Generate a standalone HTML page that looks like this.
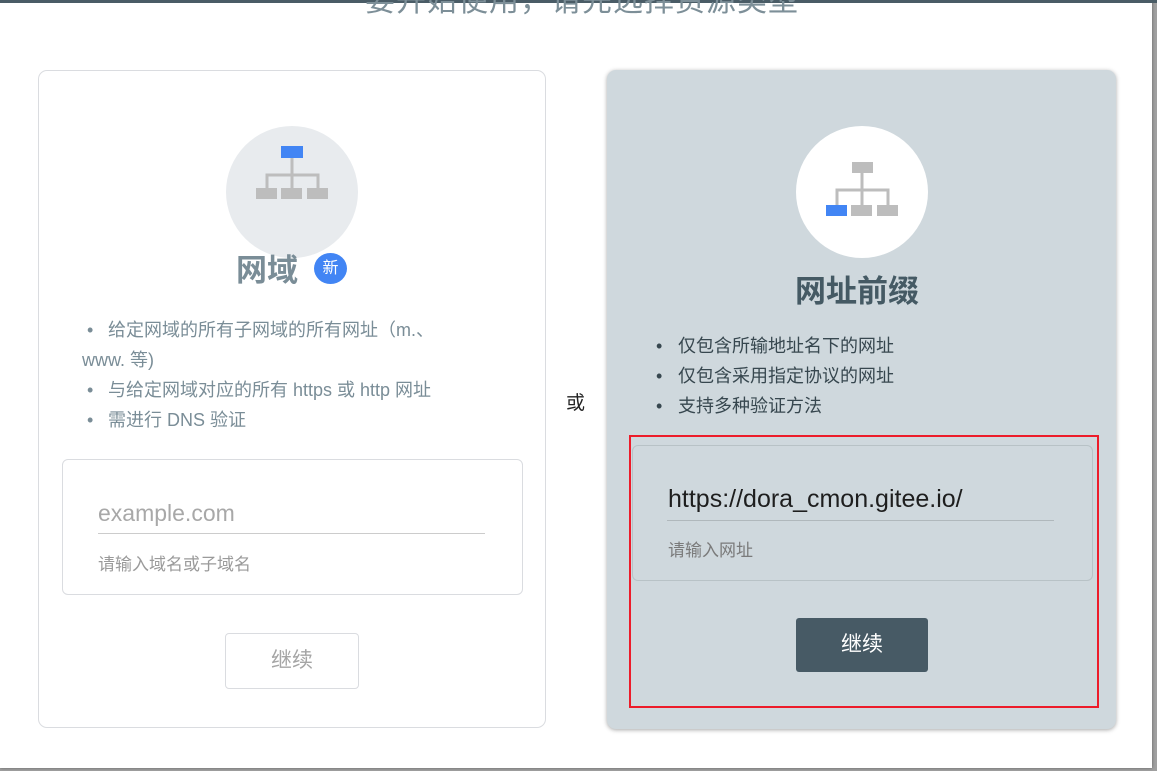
<!DOCTYPE html>
<html><head><meta charset="utf-8"><style>
*{margin:0;padding:0;box-sizing:border-box}
body{width:1157px;height:771px;overflow:hidden;background:#a0a0a0;font-family:"Liberation Sans","Noto Sans CJK SC",sans-serif;position:relative}
.a{position:absolute}
#dlg{left:0;top:0;width:1152px;height:768px;background:#fff;box-shadow:0 0 3px rgba(0,0,0,.4)}
#bar{left:0;top:0;width:1157px;height:3px;background:#4a5c66}
.t{white-space:nowrap}
</style></head><body>
<div id="dlg" class="a"></div>
<div id="bar" class="a"></div>
<div class="a t" style="left:365px;top:-24px;font-size:30px;letter-spacing:1px;color:#7d8f98">要开始使用，请先选择资源类型</div>

<div class="a" style="left:38px;top:70px;width:508px;height:658px;border:1.5px solid #dadce0;border-radius:9px;background:#fff"></div>
<div class="a" style="left:226px;top:126px;width:132px;height:132px;border-radius:50%;background:#e8ebee"></div>
<svg class="a" style="left:250px;top:140px" width="90" height="65">
<rect x="31" y="6" width="22" height="12" fill="#4285f4"/>
<path d="M42 18V48M17 48V35H68V48" stroke="#bdbdbd" stroke-width="3" fill="none"/>
<rect x="6" y="48" width="21" height="11" fill="#bdbdbd"/><rect x="31" y="48" width="21" height="11" fill="#bdbdbd"/><rect x="57" y="48" width="21" height="11" fill="#bdbdbd"/>
</svg>
<div class="a t" style="left:236px;top:245px;font-size:31px;font-weight:bold;color:#7a8d97">网域</div>
<div class="a" style="left:314px;top:253px;width:33px;height:31px;border-radius:50%;background:#4285f4;color:#fff;font-size:16px;text-align:center;line-height:31px">新</div>
<div class="a" style="left:82px;top:315px;width:400px;font-size:18px;line-height:30px;color:#7a8d97">
<div><span style="display:inline-block;width:26px">&nbsp;•</span>给定网域的所有子网域的所有网址（m.、<br>www. 等)</div>
<div><span style="display:inline-block;width:26px">&nbsp;•</span>与给定网域对应的所有 https 或 http 网址</div>
<div><span style="display:inline-block;width:26px">&nbsp;•</span>需进行 DNS 验证</div>
</div>
<div class="a" style="left:62px;top:459px;width:461px;height:136px;border:1.5px solid #dadce0;border-radius:6px"></div>
<div class="a t" style="left:98px;top:500px;font-size:23px;color:#a8a8a8">example.com</div>
<div class="a" style="left:98px;top:533px;width:387px;height:1px;background:#ccc"></div>
<div class="a t" style="left:98px;top:550px;font-size:17px;color:#9a9a9a">请输入域名或子域名</div>
<div class="a" style="left:225px;top:633px;width:134px;height:56px;border:1.5px solid #dadce0;border-radius:4px;text-align:center;line-height:53px;font-size:21px;color:#a5a5a5">继续</div>

<div class="a t" style="left:566px;top:388px;font-size:19px;color:#222">或</div>

<div class="a" style="left:607px;top:70px;width:509px;height:659px;background:#cfd8dd;border-radius:9px;box-shadow:0 1px 4px rgba(0,0,0,.35)"></div>
<div class="a" style="left:796px;top:126px;width:132px;height:132px;border-radius:50%;background:#fff"></div>
<svg class="a" style="left:820px;top:155px" width="90" height="65">
<rect x="32" y="7" width="21" height="11" fill="#bdbdbd"/>
<path d="M42 18V50M17 50V35H68V50" stroke="#bdbdbd" stroke-width="3" fill="none"/>
<rect x="6" y="50" width="21" height="11" fill="#4285f4"/><rect x="31" y="50" width="21" height="11" fill="#bdbdbd"/><rect x="57" y="50" width="21" height="11" fill="#bdbdbd"/>
</svg>
<div class="a t" style="left:795px;top:266px;font-size:31px;font-weight:bold;color:#455a64">网址前缀</div>
<div class="a" style="left:651px;top:331px;font-size:18px;line-height:30px;color:#37474f">
<div><span style="display:inline-block;width:27px">&nbsp;•</span>仅包含所输地址名下的网址</div>
<div><span style="display:inline-block;width:27px">&nbsp;•</span>仅包含采用指定协议的网址</div>
<div><span style="display:inline-block;width:27px">&nbsp;•</span>支持多种验证方法</div>
</div>
<div class="a" style="left:632px;top:445px;width:461px;height:136px;border:1.5px solid #b8c2c6;border-radius:6px"></div>
<div class="a t" style="left:668px;top:485px;font-size:25px;color:#1e1e1e">https://dora_cmon.gitee.io/</div>
<div class="a" style="left:667px;top:520px;width:387px;height:1px;background:#b0b8bc"></div>
<div class="a t" style="left:668px;top:536px;font-size:17px;color:#7a7a7a">请输入网址</div>
<div class="a" style="left:796px;top:618px;width:132px;height:54px;background:#475a65;border-radius:3px;text-align:center;line-height:53px;font-size:21px;color:#fff">继续</div>
<div class="a" style="left:629px;top:435px;width:470px;height:273px;border:2px solid #ed1c2a"></div>
</body></html>
